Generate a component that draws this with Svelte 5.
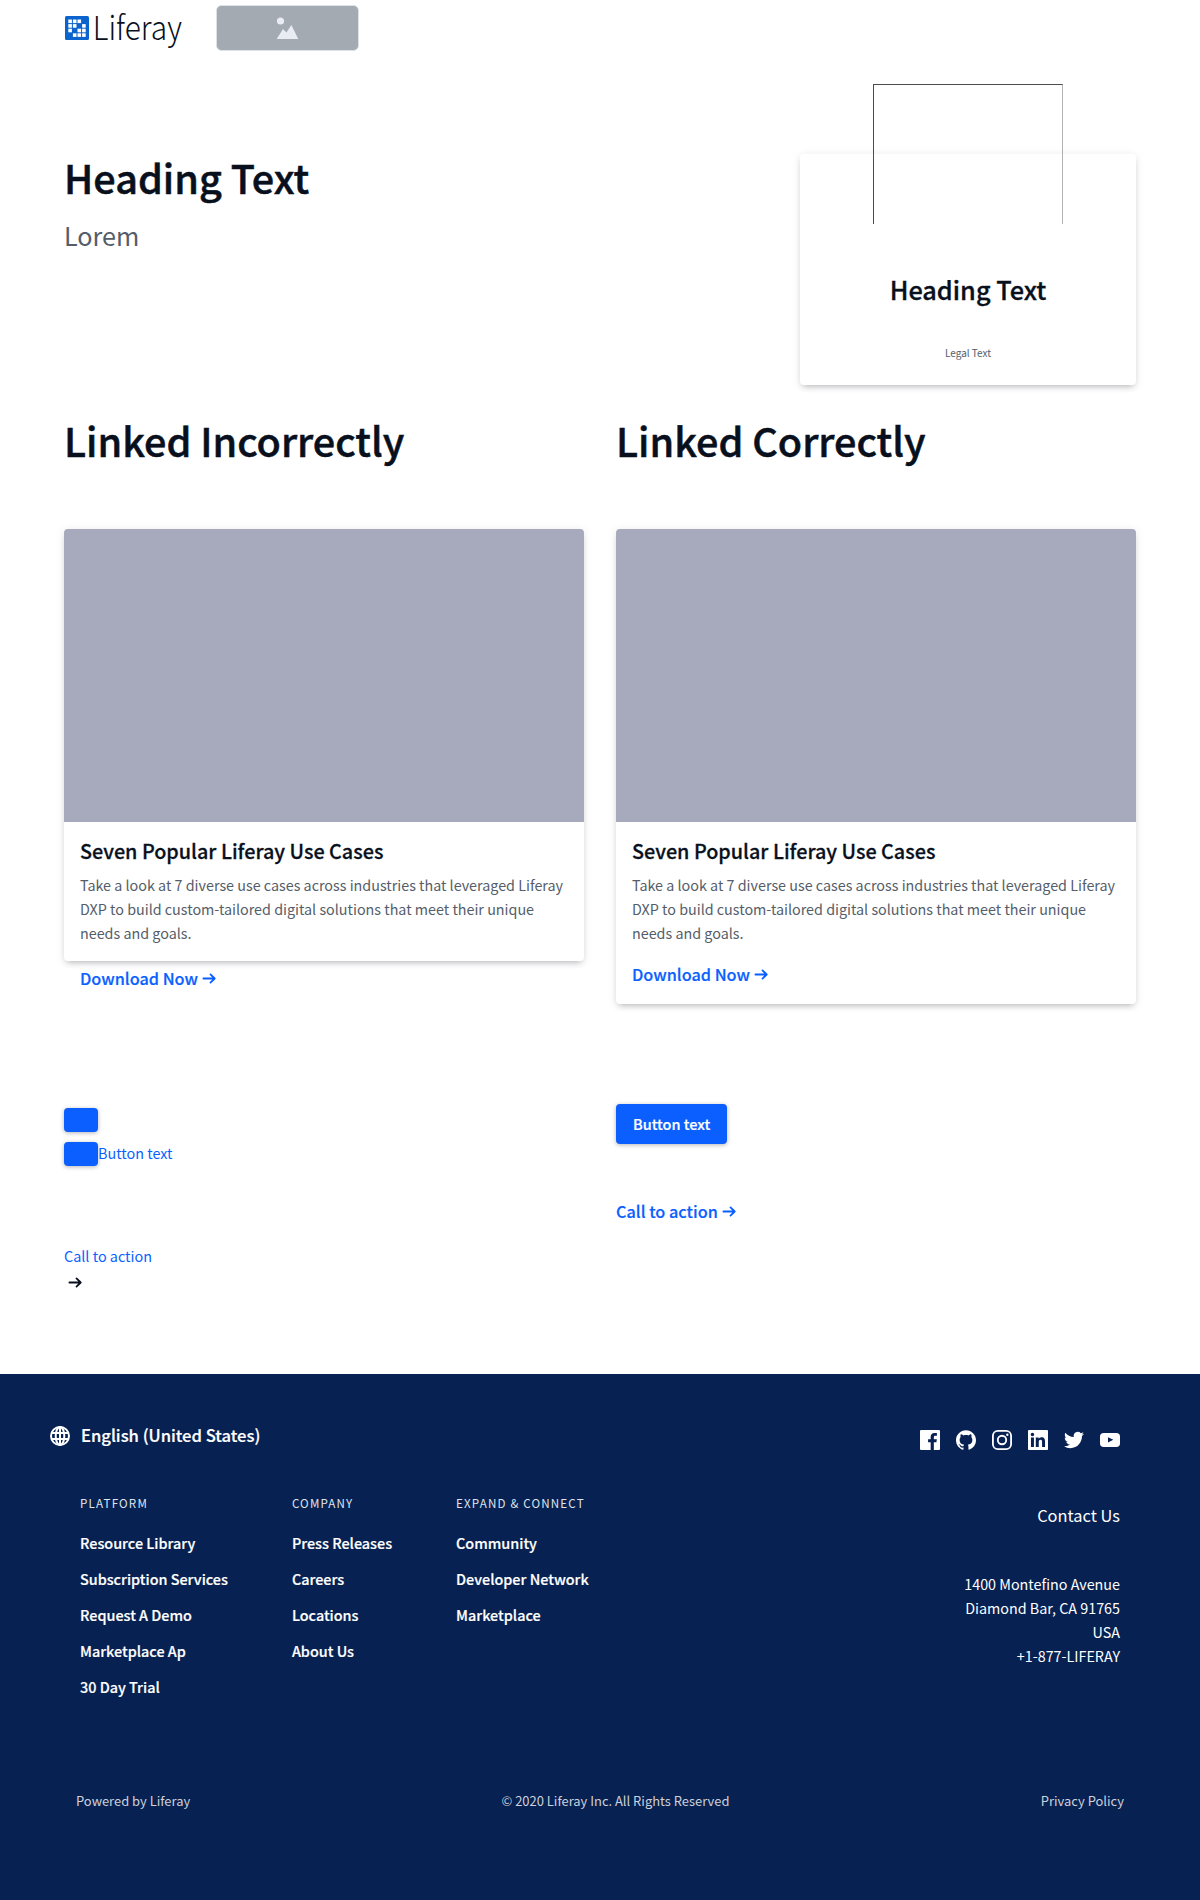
<script>
  const cells = [[0,0],[1,0],[2,0],[0,1],[1,1],[3,1],[0,2],[2,2],[3,2],[1,3],[2,3],[3,3]];
  const columns = [
    { title: 'Platform', links: ['Resource Library', 'Subscription Services', 'Request A Demo', 'Marketplace Ap', '30 Day Trial'] },
    { title: 'Company', links: ['Press Releases', 'Careers', 'Locations', 'About Us'] },
    { title: 'Expand & Connect', links: ['Community', 'Developer Network', 'Marketplace'] }
  ];
  const social = [
    { name: 'Facebook', d: 'M1.3 0h21.4A1.3 1.3 0 0 1 24 1.3v21.4a1.3 1.3 0 0 1-1.3 1.3h-6.1v-9.3h3.1l.5-3.6h-3.6V8.8c0-1.1.3-1.8 1.8-1.8h1.9V3.8c-.3 0-1.5-.1-2.8-.1-2.8 0-4.7 1.7-4.7 4.8v2.6H9.7v3.6h3.1V24H1.3A1.3 1.3 0 0 1 0 22.7V1.3A1.3 1.3 0 0 1 1.3 0z' },
    { name: 'GitHub', d: 'M12 .297c-6.63 0-12 5.373-12 12 0 5.303 3.438 9.8 8.205 11.385.6.113.82-.258.82-.577 0-.285-.01-1.04-.015-2.04-3.338.724-4.042-1.61-4.042-1.61C4.422 18.07 3.633 17.7 3.633 17.7c-1.087-.744.084-.729.084-.729 1.205.084 1.838 1.236 1.838 1.236 1.07 1.835 2.809 1.305 3.495.998.108-.776.417-1.305.76-1.605-2.665-.3-5.466-1.332-5.466-5.93 0-1.31.465-2.38 1.235-3.22-.135-.303-.54-1.523.105-3.176 0 0 1.005-.322 3.3 1.23.96-.267 1.98-.399 3-.405 1.02.006 2.04.138 3 .405 2.28-1.552 3.285-1.23 3.285-1.23.645 1.653.24 2.873.12 3.176.765.84 1.23 1.91 1.23 3.22 0 4.61-2.805 5.625-5.475 5.92.42.36.81 1.096.81 2.22 0 1.606-.015 2.896-.015 3.286 0 .315.21.69.825.57C20.565 22.092 24 17.592 24 12.297c0-6.627-5.373-12-12-12' },
    { name: 'Instagram', d: 'M7 0h10a7 7 0 0 1 7 7v10a7 7 0 0 1-7 7H7a7 7 0 0 1-7-7V7a7 7 0 0 1 7-7zm0 2.2A4.8 4.8 0 0 0 2.2 7v10A4.8 4.8 0 0 0 7 21.8h10a4.8 4.8 0 0 0 4.8-4.8V7A4.8 4.8 0 0 0 17 2.2zM12 5.84a6.16 6.16 0 1 1 0 12.32 6.16 6.16 0 0 1 0-12.32zm0 2.2a3.96 3.96 0 1 0 0 7.92 3.96 3.96 0 0 0 0-7.92zM18.4 4.2a1.44 1.44 0 1 1 0 2.88 1.44 1.44 0 0 1 0-2.88z' },
    { name: 'LinkedIn', d: 'M20.447 20.452h-3.554v-5.569c0-1.328-.027-3.037-1.852-3.037-1.853 0-2.136 1.445-2.136 2.939v5.667H9.351V9h3.414v1.561h.046c.477-.9 1.637-1.85 3.37-1.85 3.601 0 4.267 2.37 4.267 5.455v6.286zM5.337 7.433c-1.144 0-2.063-.926-2.063-2.065 0-1.138.92-2.063 2.063-2.063 1.14 0 2.064.925 2.064 2.063 0 1.139-.925 2.065-2.064 2.065zm1.782 13.019H3.555V9h3.564v11.452zM22.7 0H1.3C.6 0 0 .6 0 1.3v21.4c0 .7.6 1.3 1.3 1.3h21.4c.7 0 1.3-.6 1.3-1.3V1.3C24 .6 23.4 0 22.7 0z' },
    { name: 'Twitter', d: 'M23.953 4.57a10 10 0 01-2.825.775 4.958 4.958 0 002.163-2.723c-.951.555-2.005.959-3.127 1.184a4.92 4.92 0 00-8.384 4.482C7.69 8.095 4.067 6.13 1.64 3.162a4.822 4.822 0 00-.666 2.475c0 1.71.87 3.213 2.188 4.096a4.904 4.904 0 01-2.228-.616v.06a4.923 4.923 0 003.946 4.827 4.996 4.996 0 01-2.212.085 4.936 4.936 0 004.604 3.417 9.867 9.867 0 01-6.102 2.105c-.39 0-.779-.023-1.17-.067a13.995 13.995 0 007.557 2.209c9.053 0 13.998-7.496 13.998-13.985 0-.21 0-.42-.015-.63A9.935 9.935 0 0024 4.59z' },
    { name: 'YouTube', d: 'M4.5 3.6h15A4.5 4.5 0 0 1 24 8.1v7.8a4.5 4.5 0 0 1-4.5 4.5h-15A4.5 4.5 0 0 1 0 15.9V8.1a4.5 4.5 0 0 1 4.5-4.5zM9.6 8.6v6.4l6.4-3.2z' }
  ];
  const blurb = 'Take a look at 7 diverse use cases across industries that leveraged Liferay DXP to build custom-tailored digital solutions that meet their unique needs and goals.';
</script>

{#snippet arrow()}
  <svg class="arrow" viewBox="0 0 14 11" width="14" height="11" aria-hidden="true">
    <path d="M1.4 5.5H12.4M8.5 1.4l4.2 4.1-4.2 4.1" fill="none" stroke="currentColor" stroke-width="1.8" stroke-linecap="round" stroke-linejoin="round" />
  </svg>
{/snippet}

<header>
  <svg class="logo" width="120" height="45" viewBox="0 0 120 45" aria-label="Liferay">
    <rect x="1" y="11" width="24" height="24" rx="1.5" fill="#0b63ce" />
    {#each cells as [cx, cy]}
      <rect x={4.3 + cx * 4.6} y={14.5 + cy * 4.6} width="3.6" height="3.6" fill="#fff" />
    {/each}
    <text x="28.8" y="34.8" textLength="89" lengthAdjust="spacingAndGlyphs">Liferay</text>
  </svg>
  <svg class="placeholder" width="143" height="46" viewBox="0 0 143 46" aria-hidden="true">
    <rect x=".5" y=".5" width="142" height="45" rx="5" fill="#a3aab2" stroke="#dde2e7" />
    <circle cx="64.5" cy="16" r="3.6" fill="#e9ecf3" />
    <path d="M60.7 34l6.3-10 3.4 3.5 5-7.5 6.9 14z" fill="#e9ecf3" />
  </svg>
</header>

<main>
  <section class="hero">
    <div>
      <h1>Heading Text</h1>
      <p class="lead">Lorem</p>
    </div>
    <div class="promo">
      <div class="frame"></div>
      <h3>Heading Text</h3>
      <p class="legal">Legal Text</p>
    </div>
  </section>

  <section class="pair">
    <div class="col">
      <h2>Linked Incorrectly</h2>
      <article class="card">
        <div class="image"></div>
        <div class="body">
          <h4>Seven Popular Liferay Use Cases</h4>
          <p>{blurb}</p>
        </div>
      </article>
      <a class="cta below" href="#download">Download Now{@render arrow()}</a>
      <div class="buttons">
        <div class="row"><span class="stub"></span></div>
        <div class="row"><span class="stub"></span><a class="plain" href="#button">Button text</a></div>
      </div>
      <div class="loose">
        <a class="plain" href="#action">Call to action</a>
        <span class="dark">{@render arrow()}</span>
      </div>
    </div>
    <div class="col">
      <h2>Linked Correctly</h2>
      <article class="card">
        <div class="image"></div>
        <div class="body linked">
          <h4>Seven Popular Liferay Use Cases</h4>
          <p>{blurb}</p>
          <a class="cta" href="#download">Download Now{@render arrow()}</a>
        </div>
      </article>
      <a class="button" href="#button">Button text</a>
      <a class="cta action" href="#action">Call to action{@render arrow()}</a>
    </div>
  </section>
</main>

<footer>
  <div class="top">
    <div class="language">
      <svg width="20" height="20" viewBox="0 0 20 20" fill="none" stroke="#fff" stroke-width="2" aria-hidden="true">
        <circle cx="10" cy="10" r="9" />
        <ellipse cx="10" cy="10" rx="4.3" ry="9" />
        <path d="M10 1v18M1.8 7h16.4M1.8 13h16.4" />
      </svg>
      <span>English (United States)</span>
    </div>
    <div class="social">
      {#each social as s}
        <svg width="20" height="20" viewBox="0 0 24 24" aria-label={s.name}><path d={s.d} fill="#fff" fill-rule="evenodd" /></svg>
      {/each}
    </div>
  </div>
  <div class="middle">
    <nav>
      {#each columns as c}
        <div>
          <h5>{c.title}</h5>
          <ul>{#each c.links as l}<li>{l}</li>{/each}</ul>
        </div>
      {/each}
    </nav>
    <address>
      <p class="contact">Contact Us</p>
      <p>1400 Montefino Avenue<br />Diamond Bar, CA 91765<br />USA<br />+1-877-LIFERAY</p>
    </address>
  </div>
  <div class="bottom">
    <span>Powered by Liferay</span>
    <span>© 2020 Liferay Inc. All Rights Reserved</span>
    <span>Privacy Policy</span>
  </div>
</footer>

<style>
  :global(body) { margin: 0; background: #fff; }
  :global(#app) { font: 400 14.34px/24px "Noto Sans CJK JP", "Source Sans Pro", sans-serif; color: #09101d; }
  h1, h2, h3, h4, h5, p, ul { margin: 0; padding: 0; font-weight: 500; }
  p { font-weight: 400; }
  /* The medium weight is thickened slightly to read as semibold. */
  h1, h2, h3, h4, .cta, .button, .language span, li { -webkit-text-stroke: .013em currentColor; }
  a { text-decoration: none; color: #0b5fff; }
  svg { display: block; flex: none; }

  header { display: flex; height: 55px; padding: 5px 64px 0; gap: 32px; box-sizing: border-box; }
  .logo { overflow: visible; }
  .logo text { font-size: 32.8px; font-weight: 300; fill: #09101d; }

  main { height: 1319px; padding: 0 64px; box-sizing: border-box; }
  .hero { display: flex; justify-content: space-between; height: 361px; padding-top: 98px; box-sizing: border-box; }
  h1, h2 { font-size: 39.6px; line-height: 48px; }
  .lead { margin-top: 16px; font-size: 25.2px; line-height: 36px; color: #545d69; }
  .promo { display: flex; flex-direction: column; align-items: center; width: 336px; height: 231px; margin-top: 1px; border-radius: 4px; background: #fff; box-shadow: 0 4px 6px -3px rgba(39, 40, 51, .3), 0 1px 8px rgba(39, 40, 51, .1); }
  .frame { width: 190px; height: 140px; margin-top: -70px; box-sizing: border-box; border: solid #4c4c4c; border-width: 1px 1px 0; border-right-color: #b2b2b2; }
  h3 { margin-top: 47px; font-size: 25.3px; line-height: 36px; }
  .legal { margin-top: 34px; font-size: 10px; line-height: 24px; color: #545d69; }

  .pair { display: grid; grid-template-columns: 520px 520px; gap: 32px; }
  .col { display: flex; flex-direction: column; align-items: flex-start; }
  .card { width: 520px; margin-top: 65px; overflow: hidden; border-radius: 4px; background: #fff; box-shadow: 0 4px 6px -3px rgba(39, 40, 51, .3), 0 1px 8px rgba(39, 40, 51, .1); }
  .image { height: 293px; background: #a7a9bc; }
  .body { padding: 16px; }
  .body.linked { padding-bottom: 18px; }
  h4 { font-size: 19.8px; line-height: 25px; }
  .body p { margin-top: 10px; color: #545d69; }
  .cta { display: flex; align-items: center; gap: 4px; font-size: 16.25px; font-weight: 500; }
  .linked .cta { margin-top: 17px; }
  .below { margin: 5px 0 0 16px; }
  .buttons { margin-top: 118px; }
  .row { display: flex; height: 24px; margin-bottom: 10px; }
  .row .plain { margin-top: -1px; }
  .plain { font-size: 14.4px; }
  .stub { width: 34px; height: 24px; border-radius: 4px; background: #0b5fff; box-shadow: 0 1px 4px rgba(39, 40, 51, .35); }
  .loose { display: flex; flex-direction: column; margin-top: 68px; }
  .dark { padding: 9px 0 0 4px; }
  .button { margin-top: 100px; padding: 8px 17px; border-radius: 4px; background: #0b5fff; color: #fff; font-size: 14.5px; font-weight: 500; box-shadow: 0 1px 4px rgba(39, 40, 51, .35); }
  .action { margin-top: 55px; }

  footer { height: 526px; box-sizing: border-box; padding-top: 50px; background: #072152; color: #fff; }
  .top { display: flex; justify-content: space-between; padding: 0 80px 0 50px; }
  .language { display: flex; align-items: center; height: 24px; gap: 11px; font-size: 16.6px; font-weight: 500; }
  .language span { padding-bottom: 2px; }
  .social { display: flex; gap: 16px; padding-top: 6px; }
  .middle { display: flex; justify-content: space-between; height: 298px; padding: 41px 80px 0; }
  nav { display: flex; gap: 64px; }
  h5 { font-size: 11.6px; font-weight: 400; line-height: 24px; letter-spacing: 1.17px; text-transform: uppercase; color: #dfe3ec; }
  ul { list-style: none; padding-top: 16px; }
  li { margin-bottom: 12px; font-size: 14.4px; font-weight: 500; }
  address { font-style: normal; text-align: right; }
  .contact { margin: 12px 0 45px; font-size: 16.4px; }
  .bottom { display: flex; justify-content: space-between; padding: 0 76px; font-size: 12.95px; color: #cdd1da; }
</style>
